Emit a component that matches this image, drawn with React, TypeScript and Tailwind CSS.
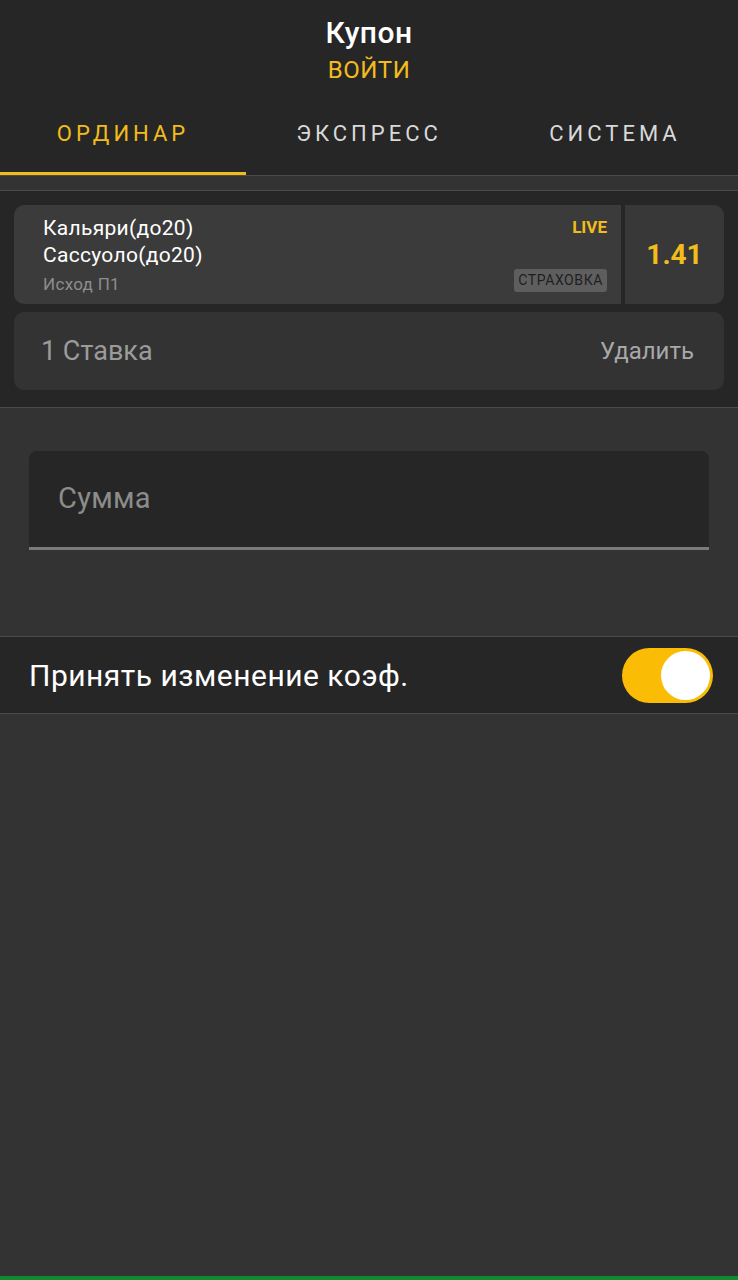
import React, { useState } from "react";

const tabs = ["ОРДИНАР", "ЭКСПРЕСС", "СИСТЕМА"];

export default function App() {
  const [active, setActive] = useState(0);
  const [accept, setAccept] = useState(true);

  return (
    <div className="min-h-screen bg-[#333333] flex flex-col font-['Roboto',sans-serif]">
      <header className="bg-[#262626]">
        <div className="flex flex-col items-center pt-[14px]">
          <h1 className="text-[30px] leading-[38px] font-medium text-white tracking-[0.5px]">Купон</h1>
          <button className="text-[24px] leading-[36px] text-[#f2bc1c] tracking-[0.5px]">ВОЙТИ</button>
        </div>
        <nav className="grid grid-cols-3 mt-[6px] border-b border-[#4a4a4a]">
          {tabs.map((t, i) => (
            <button
              key={t}
              onClick={() => setActive(i)}
              className={
                "h-[81px] text-[22px] tracking-[4px] border-b-[3px] " +
                (i === active ? "text-[#f2bc1c] border-[#f2bc1c]" : "text-[#d9d9d9] border-transparent")
              }
            >
              {t}
            </button>
          ))}
        </nav>
      </header>

      <div className="h-[15px] bg-[#333333] border-b border-[#4a4a4a]" />

      <section className="bg-[#262626] px-[14px] pt-[14px] pb-[17px] flex flex-col gap-[8px] border-b border-[#4a4a4a]">
        <div className="flex h-[99px] rounded-[10px] overflow-hidden gap-[4px]">
          <div className="flex-1 bg-[#3b3b3b] pl-[29px] pr-[14px] pt-[10px] flex justify-between">
            <div className="flex flex-col">
              <span className="text-[21px] leading-[27px] text-white tracking-[0.3px]">Кальяри(до20)</span>
              <span className="text-[21px] leading-[27px] text-white tracking-[0.3px]">Сассуоло(до20)</span>
              <span className="text-[17px] leading-[30px] text-[#8d8d8d] tracking-[0.3px]">Исход П1</span>
            </div>
            <div className="flex flex-col items-end justify-between pb-[12px]">
              <span className="text-[17px] leading-[24px] font-bold text-[#f2bc1c]">LIVE</span>
              <span className="bg-[#5e5e5e] rounded-[3px] px-[4px] text-[14px] leading-[23px] text-[#1f1f1f] tracking-[0.6px]">СТРАХОВКА</span>
            </div>
          </div>
          <div className="w-[99px] bg-[#383838] flex items-center justify-center">
            <span className="text-[28px] font-bold text-[#f2bc1c]">1.41</span>
          </div>
        </div>
        <div className="h-[78px] rounded-[10px] bg-[#333333] flex items-center justify-between pl-[27px] pr-[30px]">
          <span className="text-[27px] text-[#9b9b9b]">1 Ставка</span>
          <button className="text-[24px] text-[#a8a8a8]">Удалить</button>
        </div>
      </section>

      <section className="px-[29px] pt-[43px] pb-[86px] border-b border-[#4a4a4a]">
        <div className="h-[99px] bg-[#262626] rounded-t-[8px] border-b-[3px] border-[#7a7a7a] flex items-center px-[29px]">
          <input
            placeholder="Сумма"
            className="w-full bg-transparent outline-none text-[29px] tracking-[0.3px] text-white placeholder:text-[#8c8c8c]"
          />
        </div>
      </section>

      <div className="bg-[#262626] h-[77px] flex items-center justify-between pl-[29px] pr-[25px] border-b border-[#4a4a4a]">
        <span className="text-[30px] tracking-[0.5px] text-white">Принять изменение коэф.</span>
        <button
          onClick={() => setAccept(!accept)}
          className={
            "w-[91px] h-[55px] rounded-full p-[3px] flex " +
            (accept ? "bg-[#fbbc05] justify-end" : "bg-[#555555] justify-start")
          }
        >
          <span className="w-[49px] h-[49px] rounded-full bg-white block" />
        </button>
      </div>

      <div className="flex-1" />
      <div className="h-[4px] bg-[#0f8a2e]" />
    </div>
  );
}
